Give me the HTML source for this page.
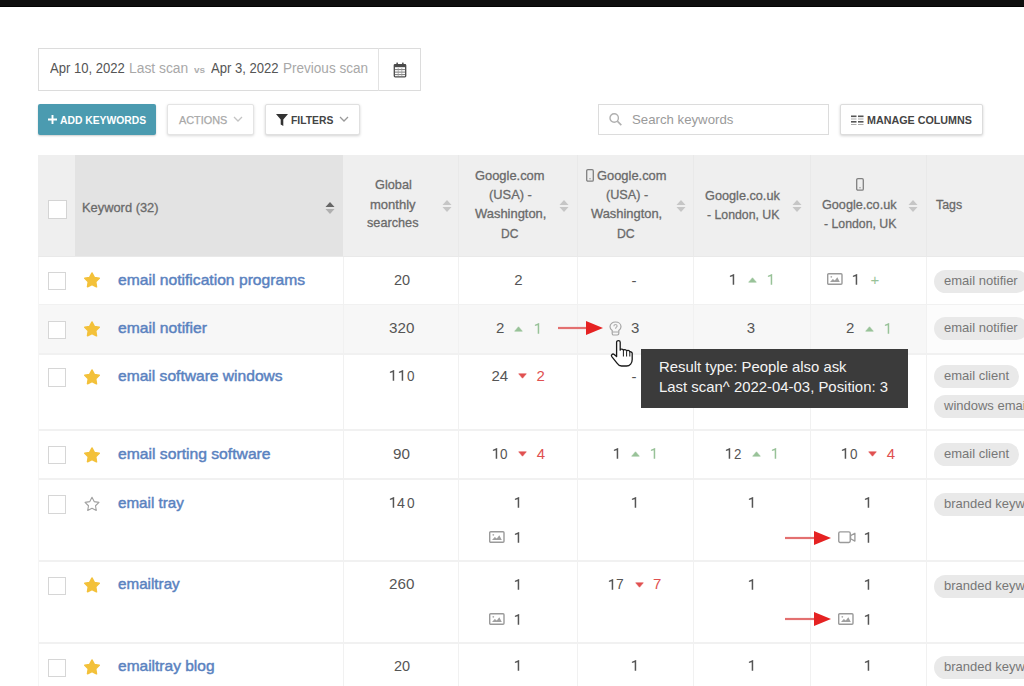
<!DOCTYPE html>
<html><head><meta charset="utf-8"><style>
html,body{margin:0;padding:0;}
body{width:1024px;height:686px;overflow:hidden;position:relative;background:#fff;font-family:"Liberation Sans", sans-serif;}
svg{display:block;}
</style></head><body>
<div style="position:absolute;left:0px;top:0px;width:1024px;height:7px;background:#0f0f0f;"></div>
<div style="position:absolute;left:0px;top:6px;width:1024px;height:1px;background:#030303;"></div>
<div style="position:absolute;left:38px;top:48px;width:383px;height:43px;box-sizing:border-box;border:1px solid #dcdcdc;background:#fff;"></div>
<div style="position:absolute;left:378px;top:48px;width:1px;height:43px;background:#e2e2e2;"></div>
<div id="f1" style="position:absolute;left:50.10px;top:60.05px;font-size:14px;line-height:16.8px;color:#555;font-weight:400;white-space:nowrap;transform:scaleX(0.9342);transform-origin:0 50%;">Apr 10, 2022</div>
<div id="f2" style="position:absolute;left:129.21px;top:60.05px;font-size:14px;line-height:16.8px;color:#a8a8a8;font-weight:400;white-space:nowrap;transform:scaleX(0.9890);transform-origin:0 50%;">Last scan</div>
<div id="f3" style="position:absolute;left:193.50px;top:64.78px;font-size:9px;line-height:10.8px;color:#b0b0b0;font-weight:700;white-space:nowrap;transform:scaleX(1.1094);transform-origin:0 50%;">vs</div>
<div id="f4" style="position:absolute;left:210.70px;top:60.05px;font-size:14px;line-height:16.8px;color:#555;font-weight:400;white-space:nowrap;transform:scaleX(0.9339);transform-origin:0 50%;">Apr 3, 2022</div>
<div id="f5" style="position:absolute;left:283.13px;top:60.05px;font-size:14px;line-height:16.8px;color:#a8a8a8;font-weight:400;white-space:nowrap;transform:scaleX(0.9670);transform-origin:0 50%;">Previous scan</div>
<svg style="position:absolute;left:393px;top:62px;" width="14" height="16" viewBox="0 0 14 16"><rect x="1.3" y="2.6" width="11.4" height="12.3" rx="0.8" fill="none" stroke="#4a4a4a" stroke-width="1.3"/><rect x="1.3" y="2.6" width="11.4" height="2.6" fill="#4a4a4a"/><rect x="3.4" y="0.6" width="1.5" height="3" fill="#4a4a4a"/><rect x="9.1" y="0.6" width="1.5" height="3" fill="#4a4a4a"/><path d="M2 7.6 H12 M2 10.1 H12 M2 12.6 H12" stroke="#6a6a6a" stroke-width="0.9"/><path d="M5.2 6 V14 M8.8 6 V14" stroke="#9a9a9a" stroke-width="0.7"/></svg>
<div style="position:absolute;left:38px;top:104px;width:118px;height:31px;background:#4b9bb0;border-radius:2px;box-shadow:0 1px 2px rgba(0,0,0,0.2);"></div>
<svg style="position:absolute;left:48px;top:115px;" width="9" height="9" viewBox="0 0 9 9"><path d="M4.5 0 V9 M0 4.5 H9" stroke="#fff" stroke-width="1.9"/></svg>
<div id="f6" style="position:absolute;left:60.20px;top:113.99px;font-size:11px;line-height:13.2px;color:#fff;font-weight:700;white-space:nowrap;transform:scaleX(0.9394);transform-origin:0 50%;">ADD KEYWORDS</div>
<div style="position:absolute;left:167px;top:104px;width:87px;height:31px;box-sizing:border-box;border:1px solid #e4e4e4;background:#fff;border-radius:2px;box-shadow:0 1px 3px rgba(0,0,0,0.15);"></div>
<div id="f7" style="position:absolute;left:179.00px;top:114.19px;font-size:11px;line-height:13.2px;color:#a8a8a8;font-weight:400;white-space:nowrap;transform:scaleX(0.9885);transform-origin:0 50%;-webkit-text-stroke:0.25px #a8a8a8;">ACTIONS</div>
<svg style="position:absolute;left:233px;top:115px;" width="10" height="8" viewBox="0 0 10 8"><path d="M1 2 L5 6 L9 2" fill="none" stroke="#c4c4c4" stroke-width="1.3"/></svg>
<div style="position:absolute;left:265px;top:104px;width:95px;height:31px;box-sizing:border-box;border:1px solid #e0e0e0;background:#fff;border-radius:2px;box-shadow:0 1px 3px rgba(0,0,0,0.18);"></div>
<svg style="position:absolute;left:276px;top:114px;" width="12" height="12" viewBox="0 0 12 12"><path d="M0 0 H12 L7.3 5.5 V12 L4.7 10.5 V5.5 Z" fill="#333"/></svg>
<div id="f8" style="position:absolute;left:291.00px;top:114.29px;font-size:11px;line-height:13.2px;color:#444;font-weight:700;white-space:nowrap;transform:scaleX(0.9401);transform-origin:0 50%;">FILTERS</div>
<svg style="position:absolute;left:339px;top:115px;" width="10" height="8" viewBox="0 0 10 8"><path d="M1 2 L5 6 L9 2" fill="none" stroke="#999" stroke-width="1.3"/></svg>
<div style="position:absolute;left:598px;top:104px;width:231px;height:31px;box-sizing:border-box;border:1px solid #dcdcdc;background:#fff;"></div>
<svg style="position:absolute;left:608px;top:112px;" width="16" height="16" viewBox="0 0 16 16"><circle cx="6.2" cy="6" r="4.2" fill="none" stroke="#b0b0b0" stroke-width="1.4"/><path d="M9.3 9.1 L13.3 13.1" stroke="#b0b0b0" stroke-width="1.6"/></svg>
<div id="f9" style="position:absolute;left:632.00px;top:111.52px;font-size:13.5px;line-height:16.2px;color:#9a9a9a;font-weight:400;white-space:nowrap;transform:scaleX(0.9789);transform-origin:0 50%;">Search keywords</div>
<div style="position:absolute;left:840px;top:104px;width:143px;height:31px;box-sizing:border-box;border:1px solid #dcdcdc;background:#fff;border-radius:2px;box-shadow:0 1px 3px rgba(0,0,0,0.18);"></div>
<svg style="position:absolute;left:851px;top:115px;" width="13" height="12" viewBox="0 0 13 12"><rect x="0" y="0.5" width="5.5" height="1.6" fill="#555"/><rect x="7" y="0.5" width="5.5" height="1.6" fill="#555"/><rect x="0" y="3.5" width="5.5" height="1" fill="#aaa"/><rect x="7" y="3.5" width="5.5" height="1" fill="#aaa"/><rect x="0" y="6" width="5.5" height="1.6" fill="#555"/><rect x="7" y="6" width="5.5" height="1.6" fill="#555"/><rect x="0" y="9" width="5.5" height="1" fill="#aaa"/><rect x="7" y="9" width="5.5" height="1" fill="#aaa"/></svg>
<div id="f10" style="position:absolute;left:866.80px;top:113.89px;font-size:11px;line-height:13.2px;color:#444;font-weight:700;white-space:nowrap;transform:scaleX(0.9756);transform-origin:0 50%;">MANAGE COLUMNS</div>
<div style="position:absolute;left:38px;top:155px;width:986px;height:102px;background:#efefef;"></div>
<div style="position:absolute;left:75px;top:155px;width:268px;height:102px;background:#e3e3e3;"></div>
<div style="position:absolute;left:38px;top:256px;width:986px;height:1px;background:#e9e9e9;"></div>
<div style="position:absolute;left:458px;top:155px;width:1px;height:101px;background:#e9e9e9;"></div>
<div style="position:absolute;left:577px;top:155px;width:1px;height:101px;background:#e9e9e9;"></div>
<div style="position:absolute;left:693px;top:155px;width:1px;height:101px;background:#e9e9e9;"></div>
<div style="position:absolute;left:810px;top:155px;width:1px;height:101px;background:#e9e9e9;"></div>
<div style="position:absolute;left:926px;top:155px;width:1px;height:101px;background:#e9e9e9;"></div>
<div style="position:absolute;left:47.5px;top:199.5px;width:19px;height:19px;box-sizing:border-box;border:1.5px solid #d4d4d4;background:#fff;"></div>
<div id="f11" style="position:absolute;left:82.31px;top:199.9px;font-size:13px;line-height:15.6px;color:#6a6a6a;font-weight:400;white-space:nowrap;transform:scaleX(0.9897);transform-origin:0 50%;-webkit-text-stroke:0.3px #6a6a6a;">Keyword (32)</div>
<svg style="position:absolute;left:325px;top:201px;" width="10" height="14" viewBox="0 0 10 14"><path d="M0.5 6 L5 1 L9.5 6 Z" fill="#666"/><path d="M0.5 8 L5 13 L9.5 8 Z" fill="#b0b0b0"/></svg>
<div id="f12" style="position:absolute;left:374.60px;top:177.0px;font-size:13px;line-height:15.6px;color:#6a6a6a;font-weight:400;white-space:nowrap;transform:scaleX(0.9790);transform-origin:0 50%;-webkit-text-stroke:0.3px #6a6a6a;">Global</div>
<div id="f13" style="position:absolute;left:369.60px;top:196.7px;font-size:13px;line-height:15.6px;color:#6a6a6a;font-weight:400;white-space:nowrap;transform:scaleX(1.0018);transform-origin:0 50%;-webkit-text-stroke:0.3px #6a6a6a;">monthly</div>
<div id="f14" style="position:absolute;left:367.00px;top:215.2px;font-size:13px;line-height:15.6px;color:#6a6a6a;font-weight:400;white-space:nowrap;transform:scaleX(0.9765);transform-origin:0 50%;-webkit-text-stroke:0.3px #6a6a6a;">searches</div>
<svg style="position:absolute;left:442px;top:199px;" width="10" height="14" viewBox="0 0 10 14"><path d="M0.5 6 L5 1 L9.5 6 Z" fill="#c6c6c6"/><path d="M0.5 8 L5 13 L9.5 8 Z" fill="#c6c6c6"/></svg>
<div id="f15" style="position:absolute;left:475.30px;top:167.7px;font-size:13px;line-height:15.6px;color:#6a6a6a;font-weight:400;white-space:nowrap;transform:scaleX(0.9919);transform-origin:0 50%;-webkit-text-stroke:0.3px #6a6a6a;">Google.com</div>
<div id="f16" style="position:absolute;left:488.50px;top:187.2px;font-size:13px;line-height:15.6px;color:#6a6a6a;font-weight:400;white-space:nowrap;transform:scaleX(0.9884);transform-origin:0 50%;-webkit-text-stroke:0.3px #6a6a6a;">(USA) -</div>
<div id="f17" style="position:absolute;left:474.60px;top:206.3px;font-size:13px;line-height:15.6px;color:#6a6a6a;font-weight:400;white-space:nowrap;transform:scaleX(0.9948);transform-origin:0 50%;-webkit-text-stroke:0.3px #6a6a6a;">Washington,</div>
<div id="f18" style="position:absolute;left:500.67px;top:225.7px;font-size:13px;line-height:15.6px;color:#6a6a6a;font-weight:400;white-space:nowrap;transform:scaleX(0.9259);transform-origin:0 50%;-webkit-text-stroke:0.3px #6a6a6a;">DC</div>
<svg style="position:absolute;left:559px;top:199px;" width="10" height="14" viewBox="0 0 10 14"><path d="M0.5 6 L5 1 L9.5 6 Z" fill="#c6c6c6"/><path d="M0.5 8 L5 13 L9.5 8 Z" fill="#c6c6c6"/></svg>
<div id="f19" style="position:absolute;left:597.30px;top:167.7px;font-size:13px;line-height:15.6px;color:#6a6a6a;font-weight:400;white-space:nowrap;transform:scaleX(0.9919);transform-origin:0 50%;-webkit-text-stroke:0.3px #6a6a6a;">Google.com</div>
<div id="f20" style="position:absolute;left:605.70px;top:187.2px;font-size:13px;line-height:15.6px;color:#6a6a6a;font-weight:400;white-space:nowrap;transform:scaleX(0.9744);transform-origin:0 50%;-webkit-text-stroke:0.3px #6a6a6a;">(USA) -</div>
<div id="f21" style="position:absolute;left:591.40px;top:206.3px;font-size:13px;line-height:15.6px;color:#6a6a6a;font-weight:400;white-space:nowrap;transform:scaleX(0.9920);transform-origin:0 50%;-webkit-text-stroke:0.3px #6a6a6a;">Washington,</div>
<div id="f22" style="position:absolute;left:617.06px;top:225.7px;font-size:13px;line-height:15.6px;color:#6a6a6a;font-weight:400;white-space:nowrap;transform:scaleX(0.9432);transform-origin:0 50%;-webkit-text-stroke:0.3px #6a6a6a;">DC</div>
<svg style="position:absolute;left:586px;top:168.5px;" width="9" height="13" viewBox="0 0 9 13"><rect x="0.7" y="0.7" width="6.6" height="11.4" rx="1.2" fill="none" stroke="#808080" stroke-width="1.3"/><path d="M3 10.2 L4 9.3 L5 10.2" fill="none" stroke="#999" stroke-width="0.8"/></svg>
<svg style="position:absolute;left:676px;top:199px;" width="10" height="14" viewBox="0 0 10 14"><path d="M0.5 6 L5 1 L9.5 6 Z" fill="#c6c6c6"/><path d="M0.5 8 L5 13 L9.5 8 Z" fill="#c6c6c6"/></svg>
<div id="f23" style="position:absolute;left:705.30px;top:187.8px;font-size:13px;line-height:15.6px;color:#6a6a6a;font-weight:400;white-space:nowrap;transform:scaleX(0.9766);transform-origin:0 50%;-webkit-text-stroke:0.3px #6a6a6a;">Google.co.uk</div>
<div id="f24" style="position:absolute;left:706.70px;top:206.6px;font-size:13px;line-height:15.6px;color:#6a6a6a;font-weight:400;white-space:nowrap;transform:scaleX(0.9450);transform-origin:0 50%;-webkit-text-stroke:0.3px #6a6a6a;">- London, UK</div>
<svg style="position:absolute;left:792px;top:199px;" width="10" height="14" viewBox="0 0 10 14"><path d="M0.5 6 L5 1 L9.5 6 Z" fill="#c6c6c6"/><path d="M0.5 8 L5 13 L9.5 8 Z" fill="#c6c6c6"/></svg>
<svg style="position:absolute;left:855.5px;top:177.5px;" width="9" height="13" viewBox="0 0 9 13"><rect x="0.7" y="0.7" width="6.6" height="11.4" rx="1.2" fill="none" stroke="#808080" stroke-width="1.3"/><path d="M3 10.2 L4 9.3 L5 10.2" fill="none" stroke="#999" stroke-width="0.8"/></svg>
<div id="f25" style="position:absolute;left:822.20px;top:196.9px;font-size:13px;line-height:15.6px;color:#6a6a6a;font-weight:400;white-space:nowrap;transform:scaleX(0.9727);transform-origin:0 50%;-webkit-text-stroke:0.3px #6a6a6a;">Google.co.uk</div>
<div id="f26" style="position:absolute;left:823.70px;top:215.7px;font-size:13px;line-height:15.6px;color:#6a6a6a;font-weight:400;white-space:nowrap;transform:scaleX(0.9450);transform-origin:0 50%;-webkit-text-stroke:0.3px #6a6a6a;">- London, UK</div>
<svg style="position:absolute;left:908px;top:199px;" width="10" height="14" viewBox="0 0 10 14"><path d="M0.5 6 L5 1 L9.5 6 Z" fill="#c6c6c6"/><path d="M0.5 8 L5 13 L9.5 8 Z" fill="#c6c6c6"/></svg>
<div id="f27" style="position:absolute;left:936.20px;top:196.9px;font-size:13px;line-height:15.6px;color:#6a6a6a;font-weight:400;white-space:nowrap;transform:scaleX(0.9514);transform-origin:0 50%;-webkit-text-stroke:0.3px #6a6a6a;">Tags</div>
<div style="position:absolute;left:38px;top:257px;width:986px;height:47px;background:#fff;"></div>
<div style="position:absolute;left:38px;top:304px;width:986px;height:50px;background:#f7f7f7;"></div>
<div style="position:absolute;left:38px;top:354px;width:986px;height:75px;background:#fff;"></div>
<div style="position:absolute;left:38px;top:429px;width:986px;height:49px;background:#fff;"></div>
<div style="position:absolute;left:38px;top:478px;width:986px;height:82px;background:#fff;"></div>
<div style="position:absolute;left:38px;top:560px;width:986px;height:82px;background:#fff;"></div>
<div style="position:absolute;left:38px;top:642px;width:986px;height:58px;background:#fff;"></div>
<div style="position:absolute;left:926px;top:304px;width:98px;height:50px;background:#fcfcfc;"></div>
<div style="position:absolute;left:38px;top:303.5px;width:986px;height:1.5px;background:#f1f1f1;"></div>
<div style="position:absolute;left:38px;top:353px;width:986px;height:1.5px;background:#f1f1f1;"></div>
<div style="position:absolute;left:38px;top:429px;width:986px;height:1.5px;background:#f1f1f1;"></div>
<div style="position:absolute;left:38px;top:478px;width:986px;height:1.5px;background:#f1f1f1;"></div>
<div style="position:absolute;left:38px;top:560px;width:986px;height:1.5px;background:#f1f1f1;"></div>
<div style="position:absolute;left:38px;top:642px;width:986px;height:1.5px;background:#f1f1f1;"></div>
<div style="position:absolute;left:343px;top:257px;width:1px;height:430px;background:#f1f1f1;"></div>
<div style="position:absolute;left:458px;top:257px;width:1px;height:430px;background:#f1f1f1;"></div>
<div style="position:absolute;left:577px;top:257px;width:1px;height:430px;background:#f1f1f1;"></div>
<div style="position:absolute;left:693px;top:257px;width:1px;height:430px;background:#f1f1f1;"></div>
<div style="position:absolute;left:810px;top:257px;width:1px;height:430px;background:#f1f1f1;"></div>
<div style="position:absolute;left:926px;top:257px;width:1px;height:430px;background:#f1f1f1;"></div>
<div style="position:absolute;left:38px;top:257px;width:1px;height:430px;background:#f5f5f5;"></div>
<div style="position:absolute;left:47.5px;top:271.7px;width:18.5px;height:18.5px;box-sizing:border-box;border:1.5px solid #d6d6d6;background:#fff;"></div>
<svg style="position:absolute;left:83.2px;top:271.4px;" width="18" height="18" viewBox="0 0 18 18"><polygon points="9.00,2.00 11.29,6.44 16.23,7.25 12.71,10.81 13.47,15.75 9.00,13.50 4.53,15.75 5.29,10.81 1.77,7.25 6.71,6.44" fill="#f3c13a" stroke="#f3c13a" stroke-width="1.6" stroke-linejoin="round"/></svg>
<div id="f28" style="position:absolute;left:117.80px;top:270.5px;font-size:15px;line-height:18.0px;color:#5a82bf;font-weight:400;white-space:nowrap;transform:scaleX(1.0434);transform-origin:0 50%;-webkit-text-stroke:0.45px #5a82bf;">email notification programs</div>
<div id="f29" style="position:absolute;left:393.80px;top:270.5px;font-size:15px;line-height:18.0px;color:#555555;font-weight:400;white-space:nowrap;transform:scaleX(0.9668);transform-origin:0 50%;">20</div>
<div style="position:absolute;left:47.5px;top:320.6px;width:18.5px;height:18.5px;box-sizing:border-box;border:1.5px solid #d6d6d6;background:#fff;"></div>
<svg style="position:absolute;left:83.2px;top:320.3px;" width="18" height="18" viewBox="0 0 18 18"><polygon points="9.00,2.00 11.29,6.44 16.23,7.25 12.71,10.81 13.47,15.75 9.00,13.50 4.53,15.75 5.29,10.81 1.77,7.25 6.71,6.44" fill="#f3c13a" stroke="#f3c13a" stroke-width="1.6" stroke-linejoin="round"/></svg>
<div id="f30" style="position:absolute;left:117.80px;top:319.4px;font-size:15px;line-height:18.0px;color:#5a82bf;font-weight:400;white-space:nowrap;transform:scaleX(1.0454);transform-origin:0 50%;-webkit-text-stroke:0.45px #5a82bf;">email notifier</div>
<div id="f31" style="position:absolute;left:389.00px;top:319.4px;font-size:15px;line-height:18.0px;color:#555555;font-weight:400;white-space:nowrap;transform:scaleX(1.0128);transform-origin:0 50%;">320</div>
<div style="position:absolute;left:47.5px;top:368px;width:18.5px;height:18.5px;box-sizing:border-box;border:1.5px solid #d6d6d6;background:#fff;"></div>
<svg style="position:absolute;left:83.2px;top:367.7px;" width="18" height="18" viewBox="0 0 18 18"><polygon points="9.00,2.00 11.29,6.44 16.23,7.25 12.71,10.81 13.47,15.75 9.00,13.50 4.53,15.75 5.29,10.81 1.77,7.25 6.71,6.44" fill="#f3c13a" stroke="#f3c13a" stroke-width="1.6" stroke-linejoin="round"/></svg>
<div id="f32" style="position:absolute;left:117.80px;top:366.8px;font-size:15px;line-height:18.0px;color:#5a82bf;font-weight:400;white-space:nowrap;transform:scaleX(1.0393);transform-origin:0 50%;-webkit-text-stroke:0.45px #5a82bf;">email software windows</div>
<div style="position:absolute;left:47.5px;top:445.8px;width:18.5px;height:18.5px;box-sizing:border-box;border:1.5px solid #d6d6d6;background:#fff;"></div>
<svg style="position:absolute;left:83.2px;top:445.5px;" width="18" height="18" viewBox="0 0 18 18"><polygon points="9.00,2.00 11.29,6.44 16.23,7.25 12.71,10.81 13.47,15.75 9.00,13.50 4.53,15.75 5.29,10.81 1.77,7.25 6.71,6.44" fill="#f3c13a" stroke="#f3c13a" stroke-width="1.6" stroke-linejoin="round"/></svg>
<div id="f33" style="position:absolute;left:117.80px;top:444.6px;font-size:15px;line-height:18.0px;color:#5a82bf;font-weight:400;white-space:nowrap;transform:scaleX(1.0457);transform-origin:0 50%;-webkit-text-stroke:0.45px #5a82bf;">email sorting software</div>
<div id="f34" style="position:absolute;left:393.00px;top:444.6px;font-size:15px;line-height:18.0px;color:#555555;font-weight:400;white-space:nowrap;transform:scaleX(1.0158);transform-origin:0 50%;">90</div>
<div style="position:absolute;left:47.5px;top:495.2px;width:18.5px;height:18.5px;box-sizing:border-box;border:1.5px solid #d6d6d6;background:#fff;"></div>
<svg style="position:absolute;left:83.2px;top:494.9px;" width="18" height="18" viewBox="0 0 18 18"><polygon points="9.00,2.30 11.17,6.61 15.94,7.34 12.52,10.74 13.29,15.51 9.00,13.30 4.71,15.51 5.48,10.74 2.06,7.34 6.83,6.61" fill="none" stroke="#a0a0a0" stroke-width="1.1" stroke-linejoin="round"/></svg>
<div id="f35" style="position:absolute;left:117.80px;top:494.0px;font-size:15px;line-height:18.0px;color:#5a82bf;font-weight:400;white-space:nowrap;transform:scaleX(1.0135);transform-origin:0 50%;-webkit-text-stroke:0.45px #5a82bf;">email tray</div>
<div style="position:absolute;left:47.5px;top:576.6px;width:18.5px;height:18.5px;box-sizing:border-box;border:1.5px solid #d6d6d6;background:#fff;"></div>
<svg style="position:absolute;left:83.2px;top:576.3000000000001px;" width="18" height="18" viewBox="0 0 18 18"><polygon points="9.00,2.00 11.29,6.44 16.23,7.25 12.71,10.81 13.47,15.75 9.00,13.50 4.53,15.75 5.29,10.81 1.77,7.25 6.71,6.44" fill="#f3c13a" stroke="#f3c13a" stroke-width="1.6" stroke-linejoin="round"/></svg>
<div id="f36" style="position:absolute;left:117.80px;top:575.4px;font-size:15px;line-height:18.0px;color:#5a82bf;font-weight:400;white-space:nowrap;transform:scaleX(1.0139);transform-origin:0 50%;-webkit-text-stroke:0.45px #5a82bf;">emailtray</div>
<div id="f37" style="position:absolute;left:389.00px;top:575.4px;font-size:15px;line-height:18.0px;color:#555555;font-weight:400;white-space:nowrap;transform:scaleX(1.0128);transform-origin:0 50%;">260</div>
<div style="position:absolute;left:47.5px;top:658.5px;width:18.5px;height:18.5px;box-sizing:border-box;border:1.5px solid #d6d6d6;background:#fff;"></div>
<svg style="position:absolute;left:83.2px;top:658.2px;" width="18" height="18" viewBox="0 0 18 18"><polygon points="9.00,2.00 11.29,6.44 16.23,7.25 12.71,10.81 13.47,15.75 9.00,13.50 4.53,15.75 5.29,10.81 1.77,7.25 6.71,6.44" fill="#f3c13a" stroke="#f3c13a" stroke-width="1.6" stroke-linejoin="round"/></svg>
<div id="f38" style="position:absolute;left:117.80px;top:657.3px;font-size:15px;line-height:18.0px;color:#5a82bf;font-weight:400;white-space:nowrap;transform:scaleX(1.0340);transform-origin:0 50%;-webkit-text-stroke:0.45px #5a82bf;">emailtray blog</div>
<div id="f39" style="position:absolute;left:393.80px;top:657.3px;font-size:15px;line-height:18.0px;color:#555555;font-weight:400;white-space:nowrap;transform:scaleX(0.9668);transform-origin:0 50%;">20</div>
<svg style="position:absolute;left:389.4px;top:369.95px;" width="6" height="11" viewBox="0 0 6 11"><path d="M5.2 0 V10.8 H3.7 V2.2 L0.9 3.0 V1.7 L4.9 0 Z" fill="#555555"/></svg>
<svg style="position:absolute;left:398.2px;top:369.95px;" width="6" height="11" viewBox="0 0 6 11"><path d="M5.2 0 V10.8 H3.7 V2.2 L0.9 3.0 V1.7 L4.9 0 Z" fill="#555555"/></svg>
<div id="f40" style="position:absolute;left:406.90px;top:366.8px;font-size:15px;line-height:18.0px;color:#555555;font-weight:400;white-space:nowrap;transform:scaleX(0.9000);transform-origin:0 50%;">0</div>
<svg style="position:absolute;left:389.4px;top:497.15px;" width="6" height="11" viewBox="0 0 6 11"><path d="M5.2 0 V10.8 H3.7 V2.2 L0.9 3.0 V1.7 L4.9 0 Z" fill="#555555"/></svg>
<div id="f41" style="position:absolute;left:397.40px;top:494.0px;font-size:15px;line-height:18.0px;color:#555555;font-weight:400;white-space:nowrap;transform:scaleX(0.9500);transform-origin:0 50%;">4</div>
<div id="f42" style="position:absolute;left:407.10px;top:494.0px;font-size:15px;line-height:18.0px;color:#555555;font-weight:400;white-space:nowrap;transform:scaleX(0.9125);transform-origin:0 50%;">0</div>
<div style="position:absolute;left:218.5px;width:600px;text-align:center;top:270.5px;font-size:15px;line-height:18.0px;color:#555555;font-weight:400;white-space:nowrap;">2</div>
<div style="position:absolute;left:334px;width:600px;text-align:center;top:272.0px;font-size:15px;line-height:18.0px;color:#555555;font-weight:400;white-space:nowrap;">-</div>
<svg style="position:absolute;left:729.0px;top:273.65px;" width="6" height="11" viewBox="0 0 6 11"><path d="M5.2 0 V10.8 H3.7 V2.2 L0.9 3.0 V1.7 L4.9 0 Z" fill="#555555"/></svg>
<svg style="position:absolute;left:748px;top:276.7px;" width="9" height="6" viewBox="0 0 9 6"><path d="M0.7 5.2 L4.5 0.8 L8.3 5.2 Z" fill="#98c298" stroke="#98c298" stroke-width="0.6" stroke-linejoin="round"/></svg>
<svg style="position:absolute;left:767.2px;top:273.65px;" width="6" height="11" viewBox="0 0 6 11"><path d="M5.2 0 V10.8 H3.7 V2.2 L0.9 3.0 V1.7 L4.9 0 Z" fill="#98c298"/></svg>
<svg style="position:absolute;left:827px;top:272.5px;" width="16" height="13" viewBox="0 0 16 13"><rect x="0.7" y="0.7" width="14.3" height="10.6" rx="1" fill="none" stroke="#9a9a9a" stroke-width="1.4"/><path d="M3 9 L5.8 6 L7.8 7.6 L10.3 4.2 L12.8 9 Z" fill="#a0a0a0"/><circle cx="4.3" cy="3.8" r="0.9" fill="#aaa"/></svg>
<svg style="position:absolute;left:852.2px;top:273.65px;" width="6" height="11" viewBox="0 0 6 11"><path d="M5.2 0 V10.8 H3.7 V2.2 L0.9 3.0 V1.7 L4.9 0 Z" fill="#555555"/></svg>
<div style="position:absolute;left:575px;width:600px;text-align:center;top:270.5px;font-size:15px;line-height:18.0px;color:#98c298;font-weight:400;white-space:nowrap;">+</div>
<div style="position:absolute;left:496px;top:319.4px;font-size:15px;line-height:18.0px;color:#555555;font-weight:400;white-space:nowrap;">2</div>
<svg style="position:absolute;left:514px;top:325.6px;" width="9" height="6" viewBox="0 0 9 6"><path d="M0.7 5.2 L4.5 0.8 L8.3 5.2 Z" fill="#98c298" stroke="#98c298" stroke-width="0.6" stroke-linejoin="round"/></svg>
<svg style="position:absolute;left:533.8px;top:322.55px;" width="6" height="11" viewBox="0 0 6 11"><path d="M5.2 0 V10.8 H3.7 V2.2 L0.9 3.0 V1.7 L4.9 0 Z" fill="#98c298"/></svg>
<svg style="position:absolute;left:558px;top:321px;" width="45" height="14" viewBox="0 0 45 14"><path d="M0 7 H30" stroke="#e37070" stroke-width="2.2"/><path d="M28 0 L45 7 L28 14 Z" fill="#e52222"/></svg>
<svg style="position:absolute;left:609px;top:321px;" width="13" height="15" viewBox="0 0 13 15"><path d="M3.2 9.6 C1.6 8.4 1 7.2 1 5.8 C1 3 3.3 1 6.5 1 C9.7 1 12 3 12 5.8 C12 7.2 11.4 8.4 9.8 9.6 V12.6 C9.8 13.4 9.2 14 8.4 14 H4.6 C3.8 14 3.2 13.4 3.2 12.6 Z" fill="none" stroke="#a6a6a6" stroke-width="1.2"/><path d="M4.9 5.2 C4.9 4.2 5.6 3.5 6.5 3.5 C7.4 3.5 8.1 4.2 8.1 5 C8.1 6 6.5 6.4 6.5 7.8" fill="none" stroke="#b0b0b0" stroke-width="1.2"/><path d="M3.4 11 H9.6" stroke="#a6a6a6" stroke-width="1"/></svg>
<div style="position:absolute;left:631px;top:319.4px;font-size:15px;line-height:18.0px;color:#555555;font-weight:400;white-space:nowrap;">3</div>
<div style="position:absolute;left:451px;width:600px;text-align:center;top:319.4px;font-size:15px;line-height:18.0px;color:#555555;font-weight:400;white-space:nowrap;">3</div>
<div style="position:absolute;left:846px;top:319.4px;font-size:15px;line-height:18.0px;color:#555555;font-weight:400;white-space:nowrap;">2</div>
<svg style="position:absolute;left:864.5px;top:325.6px;" width="9" height="6" viewBox="0 0 9 6"><path d="M0.7 5.2 L4.5 0.8 L8.3 5.2 Z" fill="#98c298" stroke="#98c298" stroke-width="0.6" stroke-linejoin="round"/></svg>
<svg style="position:absolute;left:883.5px;top:322.55px;" width="6" height="11" viewBox="0 0 6 11"><path d="M5.2 0 V10.8 H3.7 V2.2 L0.9 3.0 V1.7 L4.9 0 Z" fill="#98c298"/></svg>
<div style="position:absolute;left:491.5px;top:366.8px;font-size:15px;line-height:18.0px;color:#555555;font-weight:400;white-space:nowrap;">24</div>
<svg style="position:absolute;left:517.5px;top:373px;" width="9" height="6" viewBox="0 0 9 6"><path d="M0.7 0.8 L4.5 5.2 L8.3 0.8 Z" fill="#e05050" stroke="#e05050" stroke-width="0.6" stroke-linejoin="round"/></svg>
<div style="position:absolute;left:536.5px;top:366.8px;font-size:15px;line-height:18.0px;color:#e05050;font-weight:400;white-space:nowrap;">2</div>
<div style="position:absolute;left:334px;width:600px;text-align:center;top:368.3px;font-size:15px;line-height:18.0px;color:#555555;font-weight:400;white-space:nowrap;">-</div>
<svg style="position:absolute;left:491.5px;top:447.75px;" width="6" height="11" viewBox="0 0 6 11"><path d="M5.2 0 V10.8 H3.7 V2.2 L0.9 3.0 V1.7 L4.9 0 Z" fill="#555555"/></svg>
<div id="f43" style="position:absolute;left:500.00px;top:444.6px;font-size:15px;line-height:18.0px;color:#555555;font-weight:400;white-space:nowrap;transform:scaleX(0.9000);transform-origin:0 50%;">0</div>
<svg style="position:absolute;left:517.7px;top:450.8px;" width="9" height="6" viewBox="0 0 9 6"><path d="M0.7 0.8 L4.5 5.2 L8.3 0.8 Z" fill="#e05050" stroke="#e05050" stroke-width="0.6" stroke-linejoin="round"/></svg>
<div style="position:absolute;left:536.7px;top:444.6px;font-size:15px;line-height:18.0px;color:#e05050;font-weight:400;white-space:nowrap;">4</div>
<svg style="position:absolute;left:612.7px;top:447.75px;" width="6" height="11" viewBox="0 0 6 11"><path d="M5.2 0 V10.8 H3.7 V2.2 L0.9 3.0 V1.7 L4.9 0 Z" fill="#555555"/></svg>
<svg style="position:absolute;left:630.5px;top:450.8px;" width="9" height="6" viewBox="0 0 9 6"><path d="M0.7 5.2 L4.5 0.8 L8.3 5.2 Z" fill="#98c298" stroke="#98c298" stroke-width="0.6" stroke-linejoin="round"/></svg>
<svg style="position:absolute;left:649.7px;top:447.75px;" width="6" height="11" viewBox="0 0 6 11"><path d="M5.2 0 V10.8 H3.7 V2.2 L0.9 3.0 V1.7 L4.9 0 Z" fill="#98c298"/></svg>
<svg style="position:absolute;left:725.0px;top:447.75px;" width="6" height="11" viewBox="0 0 6 11"><path d="M5.2 0 V10.8 H3.7 V2.2 L0.9 3.0 V1.7 L4.9 0 Z" fill="#555555"/></svg>
<div id="f44" style="position:absolute;left:733.60px;top:444.6px;font-size:15px;line-height:18.0px;color:#555555;font-weight:400;white-space:nowrap;transform:scaleX(0.8875);transform-origin:0 50%;">2</div>
<svg style="position:absolute;left:752px;top:450.8px;" width="9" height="6" viewBox="0 0 9 6"><path d="M0.7 5.2 L4.5 0.8 L8.3 5.2 Z" fill="#98c298" stroke="#98c298" stroke-width="0.6" stroke-linejoin="round"/></svg>
<svg style="position:absolute;left:770.7px;top:447.75px;" width="6" height="11" viewBox="0 0 6 11"><path d="M5.2 0 V10.8 H3.7 V2.2 L0.9 3.0 V1.7 L4.9 0 Z" fill="#98c298"/></svg>
<svg style="position:absolute;left:841.1px;top:447.75px;" width="6" height="11" viewBox="0 0 6 11"><path d="M5.2 0 V10.8 H3.7 V2.2 L0.9 3.0 V1.7 L4.9 0 Z" fill="#555555"/></svg>
<div id="f45" style="position:absolute;left:849.60px;top:444.6px;font-size:15px;line-height:18.0px;color:#555555;font-weight:400;white-space:nowrap;transform:scaleX(0.9000);transform-origin:0 50%;">0</div>
<svg style="position:absolute;left:868px;top:450.8px;" width="9" height="6" viewBox="0 0 9 6"><path d="M0.7 0.8 L4.5 5.2 L8.3 0.8 Z" fill="#e05050" stroke="#e05050" stroke-width="0.6" stroke-linejoin="round"/></svg>
<div style="position:absolute;left:886.7px;top:444.6px;font-size:15px;line-height:18.0px;color:#e05050;font-weight:400;white-space:nowrap;">4</div>
<svg style="position:absolute;left:514.0px;top:497.15px;" width="6" height="11" viewBox="0 0 6 11"><path d="M5.2 0 V10.8 H3.7 V2.2 L0.9 3.0 V1.7 L4.9 0 Z" fill="#555555"/></svg>
<svg style="position:absolute;left:631.2px;top:497.15px;" width="6" height="11" viewBox="0 0 6 11"><path d="M5.2 0 V10.8 H3.7 V2.2 L0.9 3.0 V1.7 L4.9 0 Z" fill="#555555"/></svg>
<svg style="position:absolute;left:747.9px;top:497.15px;" width="6" height="11" viewBox="0 0 6 11"><path d="M5.2 0 V10.8 H3.7 V2.2 L0.9 3.0 V1.7 L4.9 0 Z" fill="#555555"/></svg>
<svg style="position:absolute;left:864.1px;top:497.15px;" width="6" height="11" viewBox="0 0 6 11"><path d="M5.2 0 V10.8 H3.7 V2.2 L0.9 3.0 V1.7 L4.9 0 Z" fill="#555555"/></svg>
<svg style="position:absolute;left:488.5px;top:530.5px;" width="16" height="13" viewBox="0 0 16 13"><rect x="0.7" y="0.7" width="14.3" height="10.6" rx="1" fill="none" stroke="#9a9a9a" stroke-width="1.4"/><path d="M3 9 L5.8 6 L7.8 7.6 L10.3 4.2 L12.8 9 Z" fill="#a0a0a0"/><circle cx="4.3" cy="3.8" r="0.9" fill="#aaa"/></svg>
<svg style="position:absolute;left:514.0px;top:531.95px;" width="6" height="11" viewBox="0 0 6 11"><path d="M5.2 0 V10.8 H3.7 V2.2 L0.9 3.0 V1.7 L4.9 0 Z" fill="#555555"/></svg>
<svg style="position:absolute;left:785px;top:530.5px;" width="46" height="14" viewBox="0 0 46 14"><path d="M0 7 H31" stroke="#e37070" stroke-width="2.2"/><path d="M29 0 L46 7 L29 14 Z" fill="#e52222"/></svg>
<svg style="position:absolute;left:838px;top:530.5px;" width="19" height="13" viewBox="0 0 19 13"><rect x="0.75" y="0.9" width="11.5" height="10.6" rx="1.4" fill="none" stroke="#9a9a9a" stroke-width="1.4"/><path d="M12.6 4.6 L16.9 2.3 V10.1 L12.6 7.8 Z" fill="none" stroke="#9a9a9a" stroke-width="1.3" stroke-linejoin="round"/></svg>
<svg style="position:absolute;left:863.9px;top:531.95px;" width="6" height="11" viewBox="0 0 6 11"><path d="M5.2 0 V10.8 H3.7 V2.2 L0.9 3.0 V1.7 L4.9 0 Z" fill="#555555"/></svg>
<svg style="position:absolute;left:514.0px;top:578.55px;" width="6" height="11" viewBox="0 0 6 11"><path d="M5.2 0 V10.8 H3.7 V2.2 L0.9 3.0 V1.7 L4.9 0 Z" fill="#555555"/></svg>
<svg style="position:absolute;left:747.9px;top:578.55px;" width="6" height="11" viewBox="0 0 6 11"><path d="M5.2 0 V10.8 H3.7 V2.2 L0.9 3.0 V1.7 L4.9 0 Z" fill="#555555"/></svg>
<svg style="position:absolute;left:864.1px;top:578.55px;" width="6" height="11" viewBox="0 0 6 11"><path d="M5.2 0 V10.8 H3.7 V2.2 L0.9 3.0 V1.7 L4.9 0 Z" fill="#555555"/></svg>
<svg style="position:absolute;left:608.2px;top:578.55px;" width="6" height="11" viewBox="0 0 6 11"><path d="M5.2 0 V10.8 H3.7 V2.2 L0.9 3.0 V1.7 L4.9 0 Z" fill="#555555"/></svg>
<div id="f46" style="position:absolute;left:616.00px;top:575.4px;font-size:15px;line-height:18.0px;color:#555555;font-weight:400;white-space:nowrap;transform:scaleX(0.9250);transform-origin:0 50%;">7</div>
<svg style="position:absolute;left:634.5px;top:581.6px;" width="9" height="6" viewBox="0 0 9 6"><path d="M0.7 0.8 L4.5 5.2 L8.3 0.8 Z" fill="#e05050" stroke="#e05050" stroke-width="0.6" stroke-linejoin="round"/></svg>
<div style="position:absolute;left:653px;top:575.4px;font-size:15px;line-height:18.0px;color:#e05050;font-weight:400;white-space:nowrap;">7</div>
<svg style="position:absolute;left:488.5px;top:612.5px;" width="16" height="13" viewBox="0 0 16 13"><rect x="0.7" y="0.7" width="14.3" height="10.6" rx="1" fill="none" stroke="#9a9a9a" stroke-width="1.4"/><path d="M3 9 L5.8 6 L7.8 7.6 L10.3 4.2 L12.8 9 Z" fill="#a0a0a0"/><circle cx="4.3" cy="3.8" r="0.9" fill="#aaa"/></svg>
<svg style="position:absolute;left:514.0px;top:613.95px;" width="6" height="11" viewBox="0 0 6 11"><path d="M5.2 0 V10.8 H3.7 V2.2 L0.9 3.0 V1.7 L4.9 0 Z" fill="#555555"/></svg>
<svg style="position:absolute;left:785px;top:612px;" width="46" height="14" viewBox="0 0 46 14"><path d="M0 7 H31" stroke="#e37070" stroke-width="2.2"/><path d="M29 0 L46 7 L29 14 Z" fill="#e52222"/></svg>
<svg style="position:absolute;left:838px;top:612.5px;" width="16" height="13" viewBox="0 0 16 13"><rect x="0.7" y="0.7" width="14.3" height="10.6" rx="1" fill="none" stroke="#9a9a9a" stroke-width="1.4"/><path d="M3 9 L5.8 6 L7.8 7.6 L10.3 4.2 L12.8 9 Z" fill="#a0a0a0"/><circle cx="4.3" cy="3.8" r="0.9" fill="#aaa"/></svg>
<svg style="position:absolute;left:863.9px;top:613.95px;" width="6" height="11" viewBox="0 0 6 11"><path d="M5.2 0 V10.8 H3.7 V2.2 L0.9 3.0 V1.7 L4.9 0 Z" fill="#555555"/></svg>
<svg style="position:absolute;left:514.0px;top:660.45px;" width="6" height="11" viewBox="0 0 6 11"><path d="M5.2 0 V10.8 H3.7 V2.2 L0.9 3.0 V1.7 L4.9 0 Z" fill="#555555"/></svg>
<svg style="position:absolute;left:631.2px;top:660.45px;" width="6" height="11" viewBox="0 0 6 11"><path d="M5.2 0 V10.8 H3.7 V2.2 L0.9 3.0 V1.7 L4.9 0 Z" fill="#555555"/></svg>
<svg style="position:absolute;left:747.9px;top:660.45px;" width="6" height="11" viewBox="0 0 6 11"><path d="M5.2 0 V10.8 H3.7 V2.2 L0.9 3.0 V1.7 L4.9 0 Z" fill="#555555"/></svg>
<svg style="position:absolute;left:864.1px;top:660.45px;" width="6" height="11" viewBox="0 0 6 11"><path d="M5.2 0 V10.8 H3.7 V2.2 L0.9 3.0 V1.7 L4.9 0 Z" fill="#555555"/></svg>
<div style="position:absolute;left:934px;top:269.5px;height:23px;line-height:21.6px;padding:0 10px 0 10px;background:#e9e9e9;border-radius:11.5px;font-size:13px;color:#777;white-space:nowrap;">email notifier</div>
<div style="position:absolute;left:934px;top:317px;height:23px;line-height:21.6px;padding:0 10px 0 10px;background:#e9e9e9;border-radius:11.5px;font-size:13px;color:#777;white-space:nowrap;">email notifier</div>
<div style="position:absolute;left:934px;top:365px;height:23px;line-height:21.6px;padding:0 10px 0 10px;background:#e9e9e9;border-radius:11.5px;font-size:13px;color:#777;white-space:nowrap;">email client</div>
<div style="position:absolute;left:934px;top:395px;height:23px;line-height:21.6px;padding:0 10px 0 10px;background:#e9e9e9;border-radius:11.5px;font-size:13px;color:#777;white-space:nowrap;">windows email</div>
<div style="position:absolute;left:934px;top:443px;height:23px;line-height:21.6px;padding:0 10px 0 10px;background:#e9e9e9;border-radius:11.5px;font-size:13px;color:#777;white-space:nowrap;">email client</div>
<div style="position:absolute;left:934px;top:492.5px;height:23px;line-height:21.6px;padding:0 10px 0 10px;background:#e9e9e9;border-radius:11.5px;font-size:13px;color:#777;white-space:nowrap;">branded keywords</div>
<div style="position:absolute;left:934px;top:574.5px;height:23px;line-height:21.6px;padding:0 10px 0 10px;background:#e9e9e9;border-radius:11.5px;font-size:13px;color:#777;white-space:nowrap;">branded keywords</div>
<div style="position:absolute;left:934px;top:656px;height:23px;line-height:21.6px;padding:0 10px 0 10px;background:#e9e9e9;border-radius:11.5px;font-size:13px;color:#777;white-space:nowrap;">branded keywords</div>
<div style="position:absolute;left:641px;top:349px;width:267px;height:59px;background:#3b3b3b;"></div>
<div id="f47" style="position:absolute;left:658.57px;top:359.18px;font-size:14.5px;line-height:17.4px;color:#f4f4f4;font-weight:400;white-space:nowrap;transform:scaleX(1.0251);transform-origin:0 50%;">Result type: People also ask</div>
<div id="f48" style="position:absolute;left:658.57px;top:379.18px;font-size:14.5px;line-height:17.4px;color:#f4f4f4;font-weight:400;white-space:nowrap;transform:scaleX(1.0277);transform-origin:0 50%;">Last scan^ 2022-04-03, Position: 3</div>
<svg style="position:absolute;left:609px;top:339px;" width="26" height="30" viewBox="0 0 26 30"><path d="M7.6 3.2 C7.6 1.2 11.2 1.2 11.2 3.2 V11.2 C11.2 9.6 14.4 9.6 14.4 11.6 C14.4 10.2 17.6 10.2 17.6 12.2 C17.6 11 20.8 11 20.8 13.2 C20.8 12.4 23.2 12.6 23.2 14.2 V20.5 C23.2 24 21 27 17.5 27 H12.5 C10.3 27 9.2 26 8 24.2 L2.8 17.6 C1.6 16 3.6 14.2 5.2 15.4 L7.6 17.6 Z" fill="#fff" stroke="#1a1a1a" stroke-width="1.3" stroke-linejoin="round"/><path d="M14.4 12 V17.5 M17.6 12.6 V17.5 M20.8 13.4 V17.5" stroke="#1a1a1a" stroke-width="1"/></svg>
</body></html>
